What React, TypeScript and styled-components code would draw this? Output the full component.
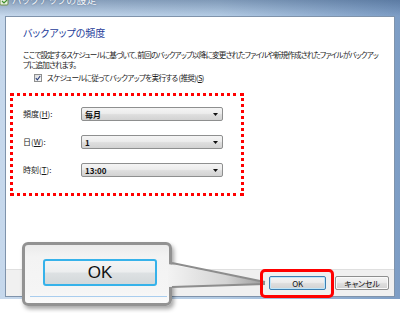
import React from 'react'
import styled, { createGlobalStyle } from 'styled-components'

const GlobalStyle = createGlobalStyle`
  html, body {
    margin: 0;
    padding: 0;
    background: #ffffff;
  }
  body {
    font-family: "Noto Sans CJK JP", "Noto Sans", sans-serif;
    font-feature-settings: "palt";
    color: #000;
  }
`

const Page = styled.div`
  position: relative;
  width: 400px;
  height: 313px;
  overflow: hidden;
  background: #fff;
`

const Window = styled.div`
  display: flex;
  flex-direction: column;
  width: 400px;
  height: 299px;
  box-sizing: border-box;
  padding: 0 5px 2px 5px;
  background:
    linear-gradient(180deg, rgba(30, 60, 100, 0.35) 0, rgba(255, 255, 255, 0) 16px),
    linear-gradient(90deg, #c6d8ec 0%, #b3cbe4 55%, #7d9dc5 100%);
`

const TitleBar = styled.div`
  display: flex;
  align-items: flex-start;
  gap: 3px;
  height: 16px;
  overflow: hidden;
  margin-left: -5px;
`

const TitleText = styled.span`
  margin-top: -6px;
  font-size: 10px;
  line-height: 12px;
  color: #f4f7fb;
  text-shadow: 0 0 3px #6f86a6, 0 0 1px #59708f;
  letter-spacing: 0.3px;
`

const Client = styled.div`
  flex: 1;
  display: flex;
  flex-direction: column;
  background: #fff;
  border: 1px solid #7f93ab;
`

const Body = styled.div`
  flex: 1;
  display: flex;
  flex-direction: column;
  align-items: flex-start;
  padding: 9px 0 0 17px;
`

const Heading = styled.div`
  font-size: 10px;
  line-height: 14px;
  color: #1e3c9a;
`

const Description = styled.p`
  margin: 10px 0 0;
  white-space: nowrap;
  font-size: 7.6px;
  line-height: 10px;
  letter-spacing: -0.85px;
  color: #1a1a1a;
`

const CheckRow = styled.label`
  display: flex;
  align-items: center;
  gap: 5px;
  margin: 3px 0 0 11px;
  font-size: 7.6px;
  line-height: 10px;
  letter-spacing: -0.7px;
  color: #1a1a1a;
`

const CheckBox = styled.span`
  display: flex;
  align-items: center;
  justify-content: center;
  width: 8px;
  height: 8px;
  box-sizing: border-box;
  border: 1px solid #8e8f8f;
  background: linear-gradient(135deg, #dcdcdc, #fbfbfb);
`

const Highlight = styled.div`
  display: flex;
  flex-direction: column;
  gap: 14px;
  width: 234px;
  box-sizing: border-box;
  margin: 10px 0 0 -13px;
  padding: 11px 18px 16px 10px;
  border: 3px dotted #ff0000;
`

const FieldRow = styled.div`
  display: flex;
  align-items: center;
`

const FieldLabel = styled.span`
  width: 58px;
  font-size: 8px;
  line-height: 10px;
  color: #1a1a1a;
`

const Combo = styled.div`
  display: flex;
  align-items: center;
  justify-content: space-between;
  width: 142px;
  height: 14px;
  box-sizing: border-box;
  padding: 0 4px 0 3px;
  border: 1px solid #8e8f8f;
  border-radius: 2px;
  background: linear-gradient(180deg, #f4f4f4 0%, #ececec 45%, #dedede 55%, #d2d2d2 100%);
  font-size: 8px;
  font-weight: 700;
  color: #111;
`

const Footer = styled.div`
  display: flex;
  align-items: center;
  justify-content: flex-end;
  gap: 9px;
  height: 26px;
  padding-right: 5px;
  background: #f0f0f0;
  border-top: 1px solid #dfdfdf;
`

const Button = styled.div<{ $width: number; $focused?: boolean }>`
  display: flex;
  align-items: center;
  justify-content: center;
  width: ${p => p.$width}px;
  height: 14px;
  box-sizing: border-box;
  border: 1px solid ${p => (p.$focused ? '#3c7fb1' : '#8e8f8f')};
  border-radius: 2px;
  background: linear-gradient(180deg, #f4f4f4 0%, #ececec 45%, #dedede 55%, #d2d2d2 100%);
  box-shadow: ${p => (p.$focused ? 'inset 0 0 0 1px #bfe6fa' : 'inset 0 0 0 1px #fafafa')};
  font-size: 8px;
  letter-spacing: -0.2px;
  color: #111;
`

const RedFrame = styled.div`
  position: absolute;
  left: 260px;
  top: 269px;
  width: 74px;
  height: 29px;
  box-sizing: border-box;
  border: 3px solid #ff0000;
  border-radius: 5px;
`

const Callout = styled.div`
  position: absolute;
  left: 22px;
  top: 242px;
  width: 150px;
  height: 64px;
  box-sizing: border-box;
  display: flex;
  flex-direction: column;
  align-items: flex-start;
  padding: 14px 0 0 18px;
  border: 3px solid #929292;
  border-radius: 6px;
  background: linear-gradient(180deg, #ebebeb 0%, #f3f3f3 20%, #f5f5f5 80%, #fbfbfb 100%);
  box-shadow: 2px 3px 4px rgba(0, 0, 0, 0.35);
`

const BigButton = styled.div`
  display: flex;
  align-items: center;
  justify-content: center;
  width: 114px;
  height: 27px;
  box-sizing: border-box;
  border: 2px solid #36b2ea;
  border-radius: 3px;
  background: linear-gradient(180deg, #f3f4f5 0%, #eceeef 48%, #dde1e3 52%, #d3d8da 100%);
  font-family: "Liberation Sans", "Noto Sans", sans-serif;
  font-size: 17px;
  color: #111;
`

const EdgeLine = styled.div`
  width: 137px;
  height: 1px;
  margin: 10px 0 0 -13px;
  background: #a9cdee;
`

const Pointer = styled.svg`
  position: absolute;
  left: 168px;
  top: 258px;
`

const Arrow = () => (
  <svg width="5" height="3" viewBox="0 0 5 3"><path d="M0 0 H5 L2.5 3 Z" fill="#111" /></svg>
)

export default function App() {
  return (
    <Page>
      <GlobalStyle />
      <Window>
        <TitleBar>
          <svg width="9" height="6" viewBox="0 0 9 6">
            <rect x="0" y="-3" width="8" height="8" rx="1" fill="#e8efe0" stroke="#6e8f4a" strokeWidth="1" />
            <path d="M2 1 L4 3 L7 0" stroke="#3d8f2d" strokeWidth="1.2" fill="none" />
          </svg>
          <TitleText>バックアップの設定</TitleText>
        </TitleBar>
        <Client>
          <Body>
            <Heading>バックアップの頻度</Heading>
            <Description>
              ここで設定するスケジュールに基づいて、前回のバックアップ以降に変更されたファイルや新規作成されたファイルがバックアッ
              <br />
              プに追加されます。
            </Description>
            <CheckRow>
              <CheckBox>
                <svg width="6" height="6" viewBox="0 0 6 6">
                  <path d="M0.8 3.2 L2.4 4.8 L5.2 1" stroke="#2a3f7a" strokeWidth="1.1" fill="none" />
                </svg>
              </CheckBox>
              <span>スケジュールに従ってバックアップを実行する (推奨)(<u>S</u>)</span>
            </CheckRow>
            <Highlight>
              <FieldRow>
                <FieldLabel>頻度(<u>H</u>):</FieldLabel>
                <Combo>
                  <span>毎月</span>
                  <Arrow />
                </Combo>
              </FieldRow>
              <FieldRow>
                <FieldLabel>日(<u>W</u>):</FieldLabel>
                <Combo>
                  <span>1</span>
                  <Arrow />
                </Combo>
              </FieldRow>
              <FieldRow>
                <FieldLabel>時刻(<u>T</u>):</FieldLabel>
                <Combo>
                  <span>13:00</span>
                  <Arrow />
                </Combo>
              </FieldRow>
            </Highlight>
          </Body>
          <Footer>
            <Button $width={57} $focused>OK</Button>
            <Button $width={54}>キャンセル</Button>
          </Footer>
        </Client>
      </Window>
      <Callout>
        <BigButton>OK</BigButton>
        <EdgeLine />
      </Callout>
      <Pointer width="100" height="34" viewBox="0 0 100 34">
        <defs>
          <linearGradient id="ptr" x1="0" x2="1" y1="0" y2="0">
            <stop offset="0" stopColor="#f3f3f3" />
            <stop offset="0.6" stopColor="#d4d4d4" />
            <stop offset="1" stopColor="#9a9a9a" />
          </linearGradient>
        </defs>
        <polygon points="0,6 97,24 97,26 0,29" fill="url(#ptr)" />
        <path d="M4 5 L97 24 M4 29 L97 26" stroke="#8d8d8d" strokeWidth="2.2" fill="none" />
      </Pointer>
      <RedFrame />
    </Page>
  )
}
